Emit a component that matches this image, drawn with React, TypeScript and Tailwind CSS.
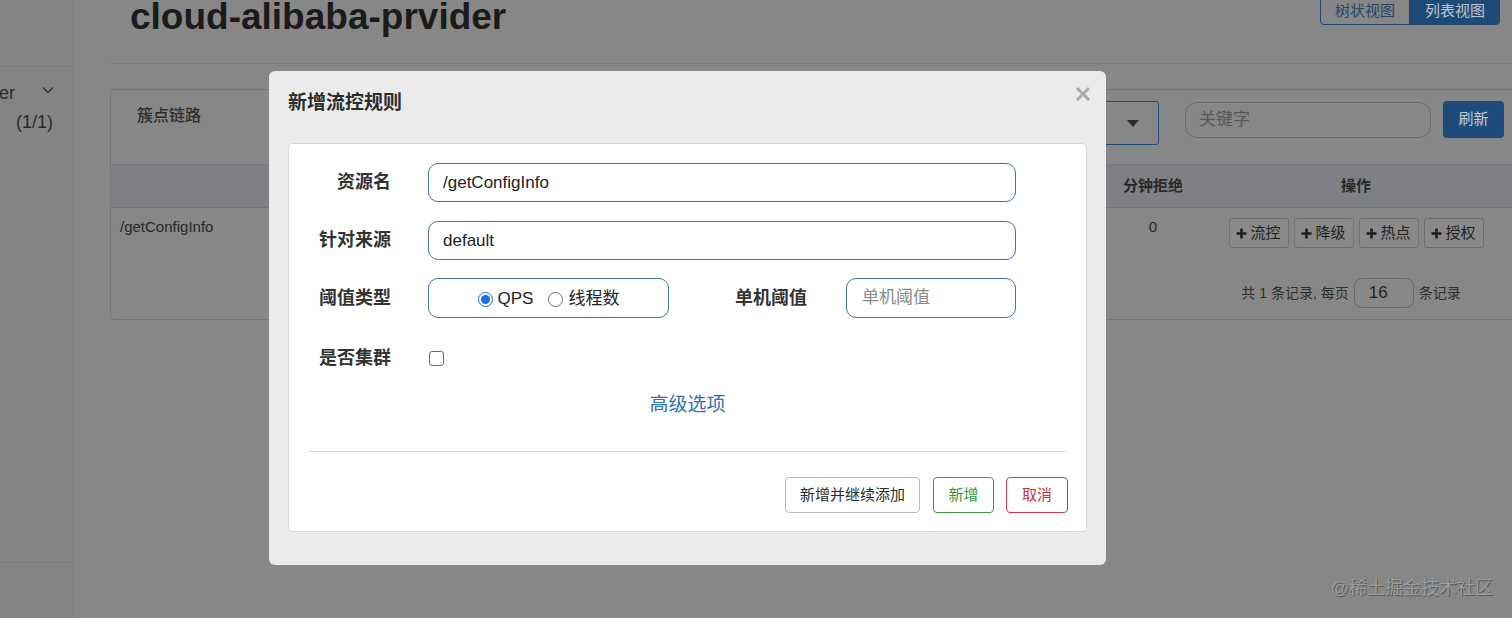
import React from "react";

const FONT = { fontFamily: '"Liberation Sans", "Noto Sans CJK SC", sans-serif' };

function Plus() {
  return (
    <svg width="11" height="11" viewBox="0 0 11 11" className="shrink-0">
      <path d="M5.5 0.5v10M0.5 5.5h10" stroke="#1e1e1e" strokeWidth="2.6" />
    </svg>
  );
}

function OpBtn({ label }: { label: string }) {
  return (
    <div className="flex h-[30px] w-[60px] items-center justify-center gap-[3px] rounded-[3px] border border-[#6f6f6f] bg-[#8a8a8a] text-[15px] text-[#1f1f1f]">
      <Plus />
      <span>{label}</span>
    </div>
  );
}

function Radio({ checked }: { checked?: boolean }) {
  return checked ? (
    <span className="flex h-[15px] w-[15px] items-center justify-center rounded-full border-[1.5px] border-[#1a6fe6] bg-white">
      <span className="h-[9px] w-[9px] rounded-full bg-[#1a6fe6]" />
    </span>
  ) : (
    <span className="h-[15px] w-[15px] rounded-full border border-[#6e6e6e] bg-white" />
  );
}

export default function App() {
  return (
    <div style={FONT} className="relative flex h-[618px] w-[1512px] overflow-hidden bg-[#878787]">
      {/* sidebar */}
      <div className="w-[73px] shrink-0 border-r border-[#818181] bg-[#848484]">
        <div className="h-[563px] border-b border-[#7b7b7b]">
          <div className="h-[67px] border-b border-[#7b7b7b]" />
          <div className="mt-[14px] flex h-[24px] items-center justify-between pr-[18px] text-[18px] leading-[24px] text-[#2a2a2a]">
            <span className="-ml-[1px]">er</span>
            <svg width="12" height="8" viewBox="0 0 12 8" className="-mt-[6px]">
              <path d="M1 1.5l5 5 5-5" fill="none" stroke="#2e2e2e" strokeWidth="1.4" />
            </svg>
          </div>
          <div className="mt-[5px] pr-[19px] text-right text-[18px] leading-[24px] text-[#2a2a2a]">(1/1)</div>
        </div>
      </div>

      {/* main */}
      <div className="flex min-w-0 flex-1 flex-col pl-[37px]">
        <div className="flex h-[64px] shrink-0 items-start justify-between border-b border-[#7b7b7b]">
          <div className="-mt-[2px] ml-[20px] text-[37px] font-bold leading-[37px] text-[#1b1b1b]">
            cloud-alibaba-prvider
          </div>
          <div className="-mt-[10px] mr-[12px] flex h-[35px] text-[15px]">
            <div className="flex w-[90px] items-center justify-center rounded-l-[4px] border border-[#21466f] bg-[#878787] pt-[8px] text-[#24466b]">
              树状视图
            </div>
            <div className="flex w-[90px] items-center justify-center rounded-r-[4px] border border-[#21466f] bg-[#1f4a78] pt-[8px] text-[#bcc6d0]">
              列表视图
            </div>
          </div>
        </div>

        <div className="-mr-[8px] mt-[25px] rounded-[4px] border border-[#767676]">
          {/* panel header */}
          <div className="flex h-[75px] items-start justify-between border-b border-[#7a7a7a]">
            <div className="ml-[26px] mt-[16px] text-[16px] font-medium leading-[20px] text-[#2c2c2c]">簇点链路</div>
            <div className="mr-[15px] mt-[11px] flex items-start">
              <div className="flex h-[44px] w-[200px] items-center justify-end rounded-[3px] border border-[#1f4b7a] pr-[19px]">
                <svg width="12" height="7" viewBox="0 0 12 7">
                  <path d="M0 0h12L6 7z" fill="#2b2b2b" />
                </svg>
              </div>
              <div className="ml-[26px] mt-[1px] flex h-[36px] w-[246px] items-center rounded-[12px] border border-[#6a6a6a] pl-[13px] text-[17px] text-[#575757]">
                关键字
              </div>
              <div className="ml-[12px] flex h-[37px] w-[61px] items-center justify-center rounded-[4px] bg-[#1f4b7b] text-[15px] text-[#c3cbd4]">
                刷新
              </div>
            </div>
          </div>
          {/* table header */}
          <div className="flex h-[43px] items-center border-b border-[#747474] bg-[#7f8083] text-[15px] font-bold text-[#282828]">
            <div className="w-[989px]" />
            <div className="w-[106px] text-center">分钟拒绝</div>
            <div className="w-[300px] text-center">操作</div>
          </div>
          {/* row */}
          <div className="flex h-[40px] items-start text-[15px] text-[#262626]">
            <div className="w-[989px] pl-[9px] pt-[9px] leading-[20px]">/getConfigInfo</div>
            <div className="w-[106px] pt-[9px] text-center leading-[20px]">0</div>
            <div className="flex w-[300px] justify-center gap-[5px] pt-[10px]">
              <OpBtn label="流控" />
              <OpBtn label="降级" />
              <OpBtn label="热点" />
              <OpBtn label="授权" />
            </div>
          </div>
          <div className="mt-[30px] flex h-[30px] items-center pb-0">
            <div className="w-[1090px]" />
            <div className="flex w-[300px] items-center justify-center text-[14px] text-[#2e2e2e]">
              <span>共 1 条记录, 每页</span>
              <span className="mx-[5px] flex h-[30px] w-[60px] items-center rounded-[8px] border border-[#6a6a6a] pl-[14px] text-[17px] text-[#1f1f1f]">
                16
              </span>
              <span>条记录</span>
            </div>
          </div>
          <div className="h-[11px]" />
        </div>
      </div>

      {/* modal */}
      <div className="absolute left-[269px] top-[71px] flex h-[494px] w-[837px] flex-col rounded-[6px] bg-[#ebebeb] px-[19px]">
        <div className="h-[72px] pt-[20px] text-[19px] font-bold leading-[24px] text-[#2b2b2b]">新增流控规则</div>
        <svg width="16" height="16" viewBox="0 0 16 16" className="absolute right-[15px] top-[15px]">
          <path d="M2 2l12 12M14 2L2 14" stroke="#ababab" strokeWidth="3" />
        </svg>
        <div className="flex h-[389px] flex-col rounded-[5px] border border-[#d9d9d9] bg-white pt-[19px]">
          <div className="flex h-[39px] items-center">
            <div className="w-[102px] text-right text-[18px] font-semibold text-[#333]">资源名</div>
            <div className="ml-[37px] flex h-[39px] w-[588px] items-center rounded-[10px] border-[1.5px] border-[#4272aa] pl-[14px] text-[17px] text-[#222]">
              /getConfigInfo
            </div>
          </div>
          <div className="mt-[19px] flex h-[39px] items-center">
            <div className="w-[102px] text-right text-[18px] font-semibold text-[#333]">针对来源</div>
            <div className="ml-[37px] flex h-[39px] w-[588px] items-center rounded-[10px] border-[1.5px] border-[#4272aa] pl-[14px] text-[17px] text-[#222]">
              default
            </div>
          </div>
          <div className="mt-[18px] flex h-[40px] items-center">
            <div className="w-[102px] text-right text-[18px] font-semibold text-[#333]">阈值类型</div>
            <div className="ml-[37px] flex h-[40px] w-[241px] items-center justify-center rounded-[10px] border-[1.5px] border-[#4272aa] pt-[2px] text-[17px] text-[#222]">
              <Radio checked />
              <span className="ml-[5px]">QPS</span>
              <span className="ml-[15px]" />
              <Radio />
              <span className="ml-[5px]">线程数</span>
            </div>
            <div className="w-[138px] text-right text-[18px] font-semibold text-[#333]">单机阈值</div>
            <div className="ml-[39px] flex h-[40px] w-[170px] items-center rounded-[10px] border-[1.5px] border-[#4272aa] pl-[15px] text-[17px] text-[#8a8a8a]">
              单机阈值
            </div>
          </div>
          <div className="mt-[20px] flex h-[40px] items-center">
            <div className="w-[102px] text-right text-[18px] font-semibold text-[#333]">是否集群</div>
            <span className="ml-[38px] h-[15px] w-[15px] rounded-[3px] border border-[#6a6a6a] bg-white" />
          </div>
          <div className="mt-[12px] h-[30px] text-center text-[19px] leading-[30px] text-[#2e6fb7]">高级选项</div>
          <div className="mx-[19px] mt-[31px] border-t border-[#dedede]" />
          <div className="mt-[25px] flex justify-end gap-[12px] pr-[18px] text-[15px]">
            <div className="flex h-[36px] w-[135px] items-center justify-center rounded-[4px] border border-[#bdbdbd] text-[#2b2b2b]">
              新增并继续添加
            </div>
            <div className="ml-[1px] flex h-[36px] w-[61px] items-center justify-center rounded-[4px] border border-[#3c9a4c] text-[#2f9a40]">
              新增
            </div>
            <div className="flex h-[36px] w-[62px] items-center justify-center rounded-[4px] border border-[#cf3a4c] text-[#c9303f]">
              取消
            </div>
          </div>
        </div>
      </div>

      {/* watermark */}
      <div className="absolute bottom-[18px] right-[19px] text-[18px] leading-[24px] text-[#9c9c9c] [text-shadow:1px_1px_0_#5a5a5a]">
        @稀土掘金技术社区
      </div>
    </div>
  );
}
